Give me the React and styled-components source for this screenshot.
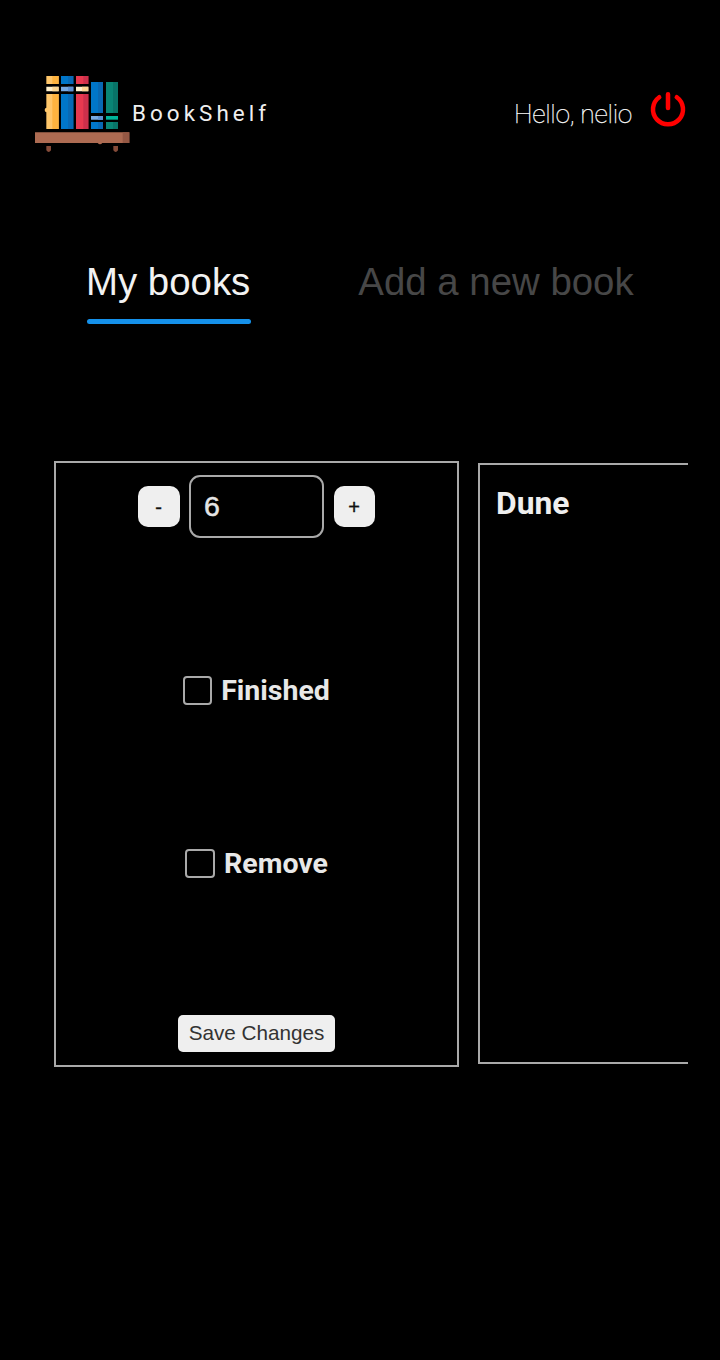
import React from 'react';
import styled, { createGlobalStyle } from 'styled-components';

const GlobalStyle = createGlobalStyle`
  * { box-sizing: border-box; }
  body { margin: 0; background: #000; color: #efefef; font-family: Roboto, sans-serif; }
`;

const Page = styled.div`
  width: 720px;
  height: 1360px;
  overflow: hidden;
  background: #000;
`;

const Header = styled.header`
  display: flex;
  align-items: flex-start;
  height: 262px;
  padding: 65px 34px 0 25px;
`;

const Logo = styled.svg`
  width: 107px;
  height: 95px;
  flex: none;
`;

const Brand = styled.h1`
  margin: 35px 0 0;
  font-size: 22.4px;
  line-height: 26px;
  font-weight: 400;
  letter-spacing: 4.05px;
`;

const Greeting = styled.span`
  margin: 33px 18px 0 auto;
  font-size: 26.4px;
  line-height: 32px;
  font-weight: 100;
  letter-spacing: -0.3px;
  color: #fff;
  -webkit-text-stroke: 0.25px #fff;
  white-space: nowrap;
`;

const PowerButton = styled.button`
  width: 36px;
  height: 36px;
  margin-top: 25px;
  padding: 0;
  border: 0;
  background: none;
  svg { display: block; overflow: visible; }
`;

const Tabs = styled.nav`
  display: flex;
  gap: 108px;
  height: 199px;
  padding-left: 86px;
`;

const Tab = styled.a`
  height: 62px;
  padding-bottom: 18px;
  font: 38.4px/40px "Liberation Sans", sans-serif;
  color: ${({ $active }) => ($active ? '#f2f2f2' : '#474747')};
  white-space: nowrap;
  &::after {
    content: '';
    display: block;
    height: 5px;
    margin: 17px -1px 0 1px;
    border-radius: 3px;
    background: ${({ $active }) => ($active ? '#1591ea' : 'transparent')};
  }
`;

const Shelf = styled.main`
  display: flex;
  gap: 19px;
  width: 634px;
  margin-left: 54px;
  overflow: hidden;
`;

const Card = styled.section`
  flex: none;
  width: 405px;
  height: 606px;
  border: 2px solid #a9a9a9;
  display: flex;
  flex-direction: column;
  align-items: center;
`;

const BookCard = styled(Card)`
  height: 601px;
  margin-top: 2px;
  align-items: flex-start;
  padding: 18px 16px;
`;

const BookTitle = styled.h2`
  margin: 0;
  font-size: 31.8px;
  line-height: 40px;
  font-weight: 700;
`;

const Stepper = styled.div`
  display: flex;
  align-items: center;
  margin: 12px 0 137px;
`;

const StepButton = styled.button`
  width: ${({ $width }) => $width}px;
  height: 41px;
  padding: 1px 1px 0 0;
  border: 0;
  border-radius: 10px;
  background: #efefef;
  color: #111;
  font: 20px/24px "Liberation Sans", sans-serif;
  -webkit-text-stroke: 0.4px #111;
`;

const PageCount = styled.div`
  width: 135px;
  height: 63px;
  margin: 0 10px 0 9px;
  padding: 0 13px;
  border: 2px solid #a9a9a9;
  border-radius: 11px;
  font-family: "Liberation Sans", sans-serif;
  font-size: 28.5px;
  line-height: 58px;
  color: #e4e4e4;
  -webkit-text-stroke: 0.5px #e4e4e4;
`;

const Option = styled.label`
  display: flex;
  align-items: center;
  gap: 9px;
  height: 32px;
  margin-bottom: ${({ $after }) => $after}px;
  font-size: 28.5px;
  line-height: 32px;
  font-weight: 700;
  color: #e8e8e8;
`;

const Box = styled.span`
  width: ${({ $width }) => $width}px;
  height: 29px;
  margin-bottom: 2px;
  border: 2px solid #a9a9a9;
  border-radius: 4px;
`;

const SaveButton = styled.button`
  width: 157px;
  height: 37px;
  padding: 0 0 2px;
  border: 0;
  border-radius: 5px;
  background: #efefef;
  color: #333;
  font: 20.7px/25px "Liberation Sans", sans-serif;
  white-space: nowrap;
`;

function BookLogo() {
  return (
    <Logo viewBox="0 0 321 285" aria-hidden="true">
      <path fill="#ffc66a" d="M64 33h37v24H64zM64 87h37v105H64v-50q-5-1-5-7t5-7z" />
      <path fill="#feb33f" d="M82 33h19v24H82zM82 87h19v105H82z" />
      <path fill="#fff0cb" d="M64 65h37v14H64zM153 65h37v14h-37z" />
      <path fill="#fbd795" d="M82 65h19v14H82zM171 65h19v14h-19z" />
      <path fill="#0076c9" d="M108 33h37v24h-37zM108 87h37v105h-37zM198 51h36v93h-36zM198 171h36v21h-36z" />
      <path fill="#0969b4" d="M129 33h16v24h-16zM129 87h16v105h-16zM219 51h15v93h-15zM219 171h15v21h-15z" />
      <path fill="#77a9e3" d="M108 65h37v14h-37zM198 153h36v11h-36z" />
      <path fill="#5f91d2" d="M129 65h16v14h-16zM219 153h15v11h-15z" />
      <path fill="#e8394f" d="M153 33h37v24h-37zM153 87h37v105h-37z" />
      <path fill="#cd304b" d="M175 33h15v24h-15zM175 87h15v105h-15z" />
      <path fill="#098575" d="M243 51h36v93h-36zM243 171h36v21h-36z" />
      <path fill="#087468" d="M264 51h15v93h-15zM264 171h15v21h-15z" />
      <path fill="#00b49b" d="M243 153h36v11h-36z" />
      <path fill="#ad6b52" d="M30 202h283v32h-81q-7 8-14 0H30z" />
      <path fill="#955844" d="M293 202h20v32h-20z" />
      <path fill="#854b39" d="M64 243h14v13q-7 10-14 0zM265 243h14v13q-7 10-14 0z" />
    </Logo>
  );
}

function PowerIcon() {
  return (
    <svg width="36" height="36" viewBox="0 0 36 36" fill="none" stroke="#f00" strokeWidth="4.5" strokeLinecap="round">
      <path d="M9.2 7.2a15 15 0 1 0 17.6 0M18 4.2v13.8" />
    </svg>
  );
}

export default function App() {
  return (
    <Page>
      <GlobalStyle />
      <Header>
        <BookLogo />
        <Brand>BookShelf</Brand>
        <Greeting>Hello, nelio</Greeting>
        <PowerButton aria-label="Log out"><PowerIcon /></PowerButton>
      </Header>
      <Tabs>
        <Tab $active>My books</Tab>
        <Tab>Add a new book</Tab>
      </Tabs>
      <Shelf>
        <Card>
          <Stepper>
            <StepButton $width={42}>-</StepButton>
            <PageCount>6</PageCount>
            <StepButton $width={41}>+</StepButton>
          </Stepper>
          <Option $after={141}><Box $width={29} />Finished</Option>
          <Option $after={135}><Box $width={30} />Remove</Option>
          <SaveButton>Save Changes</SaveButton>
        </Card>
        <BookCard>
          <BookTitle>Dune</BookTitle>
        </BookCard>
      </Shelf>
    </Page>
  );
}
